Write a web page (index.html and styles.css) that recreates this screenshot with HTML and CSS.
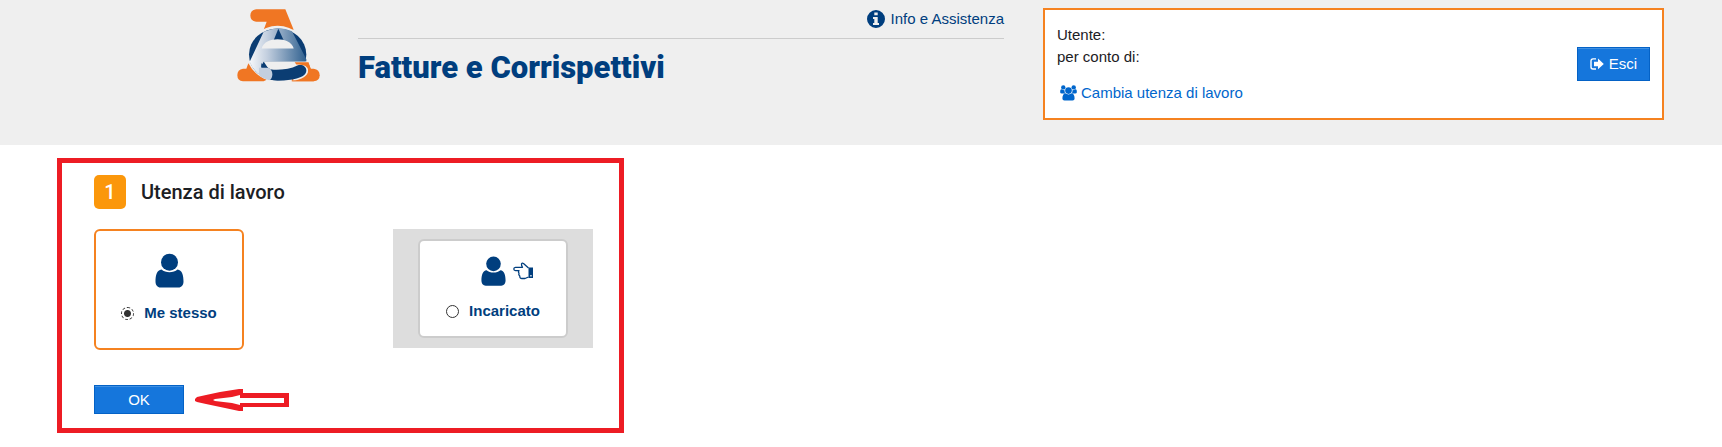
FILE: index.html
```html
<!DOCTYPE html>
<html lang="it">
<head>
<meta charset="utf-8">
<meta name="viewport" content="width=device-width, initial-scale=1">
<title>Fatture e Corrispettivi</title>
<link rel="stylesheet" href="styles.css">
</head>
<body>
<svg class="defs" aria-hidden="true">
  <symbol id="user" viewBox="0 0 29 34">
    <path d="M6.500 16C2 16.500 .500 21.500 .500 28C.500 31.500 2.500 34 5.500 34H23.500C26.500 34 28.500 31.500 28.500 28C28.500 21.500 27 16.500 22.500 16C20.500 17.800 17.500 18.800 14.500 18.800S8.500 17.800 6.500 16Z"/>
    <circle cx="14.500" cy="8.700" r="8.500"/>
  </symbol>
</svg>
<header class="header">
  <svg class="logo" viewBox="50 26 249 219" role="img" aria-label="Agenzia delle Entrate">
    <defs>
      <linearGradient id="shade" x1="90" x2="258" y1="0" y2="0" gradientUnits="userSpaceOnUse">
        <stop offset="0" stop-color="#f4f6f9"/><stop offset=".3" stop-color="#c3cfdf"/><stop offset="1" stop-color="#2f608f"/>
      </linearGradient>
    </defs>
    <path fill="#f07623" d="M108 28H195L220 90H130L139 66H108Q90 63 90 47T108 28ZM84 190L78 207H68Q51 210 51 226T68 244H130L139 240Q103 226 84 190ZM224 187H264L271 207H280Q298 210 298 226T280 244H214Z"/>
    <ellipse cx="172" cy="161" rx="90" ry="83" fill="#efefef"/>
    <ellipse cx="172" cy="164" rx="86" ry="78" fill="#0b3d73"/>
    <path fill="url(#shade)" d="M130 96Q174 76 215 94L258 178V186H130L122 200Q134 206 149 207Q164 222 149 240Q103 226 88 186Z"/>
    <path fill="#0b3d73" d="M174 87L190 121H160Z"/>
    <path fill="#efefef" d="M124 146C132 109 211 109 220 146Z"/>
    <path fill="#efefef" d="M130 185H264L262 240L232 243L216 241L240 220L230 204Q190 214 146 209Z"/>
    <path fill="#f07623" d="M223 187H264L271 207L298 226L280 244H214Q262 236 264 212Q262 192 228 194Z"/>
    <path fill="#0b3d73" d="M149 209C180 211 209 209 231 197C246 193 257 200 258 211C258 224 248 230 229 236C202 243 172 244 147 240Q164 225 149 209Z"/>
    <path fill="#0b3d73" d="M123 190L150 208L123 206Z"/>
    <path fill="#c3cfdf" d="M116 204H143Q156 209 156 223T147 241Q126 235 116 226Z"/>
  </svg>
  <div class="brand">
    <nav class="brand-nav">
      <a class="info" href="#">
        <svg width="18" height="18" viewBox="0 0 18 18" fill="currentColor" aria-hidden="true"><path fill-rule="evenodd" d="M9 0A9 9 0 1 1 9 18A9 9 0 0 1 9 0ZM7.300 2.500V5.300H10.700V2.500ZM6 7V9H7.300V13H6V15H12V13H10.700V7Z"/></svg>
        <span>Info e Assistenza</span>
      </a>
    </nav>
    <h1 class="title">Fatture e Corrispettivi</h1>
  </div>
  <section class="account" aria-label="Utente">
    <div>
      <p class="line">Utente:</p>
      <p class="line">per conto di:</p>
      <a class="switch" href="#">
        <svg width="17" height="16" viewBox="0 0 17 16" fill="currentColor" aria-hidden="true"><circle cx="3.300" cy="2.400" r="2.200"/><circle cx="13.700" cy="2.400" r="2.200"/><path d="M.200 7.500Q0 4.300 1.500 4.300L4.700 5.400Q4.200 7 5.200 8.500H1.700Q.400 8.500 .200 7.500ZM16.800 7.500Q17 4.300 15.500 4.300L12.300 5.400Q12.800 7 11.800 8.500H15.300Q16.600 8.500 16.800 7.500Z"/><circle cx="8.500" cy="5.600" r="3.300"/><path d="M5.300 8.300Q8.500 10.600 11.700 8.300Q14.600 9 14.600 13.500Q14.600 15.600 12.600 15.600H4.400Q2.400 15.600 2.400 13.500Q2.400 9 5.300 8.300Z"/></svg>
        <span>Cambia utenza di lavoro</span>
      </a>
    </div>
    <button class="button logout" type="button">
      <svg width="14" height="12" viewBox="0 0 14 12" aria-hidden="true"><path fill="none" stroke="currentColor" stroke-width="1.400" d="M6 .900H3Q1 .900 1 3V9Q1 11 3 11H6"/><path fill="currentColor" d="M4 3.700H8V.600L13.800 6L8 11.200V8.200H4Z"/></svg>
      <span>Esci</span>
    </button>
  </section>
</header>
<main class="panel">
  <form>
    <h2 class="step"><span class="badge">1</span><span>Utenza di lavoro</span></h2>
    <div class="choices">
      <label class="card selected">
        <span class="icons"><svg class="person" aria-hidden="true"><use href="#user"/></svg></span>
        <span class="option"><input type="radio" name="utenza" checked>Me stesso</span>
      </label>
      <div class="tile">
        <label class="card compact">
          <span class="icons">
            <svg class="person small" aria-hidden="true"><use href="#user"/></svg>
            <svg width="20" height="18" viewBox="0 0 20 18" aria-hidden="true"><path fill="none" stroke="#003e7e" stroke-width="1.300" stroke-linejoin="round" d="M15.500 6L10.500 1.500Q9 .500 8.500 2Q8.300 3.500 9.500 5.300H2.500Q.800 5.500 .800 7T2.500 8.600H6Q4.800 10 6 11.300Q5.200 13 6.800 14Q6.500 16.500 9 16.500H12L15.500 15"/><path fill="#003e7e" fill-rule="evenodd" d="M15.500 5.500H20V16H15.500ZM17.300 13V14.500H18.600V13Z"/></svg>
          </span>
          <span class="option"><input type="radio" name="utenza">Incaricato</span>
        </label>
      </div>
    </div>
    <div class="actions">
      <button class="button ok" type="button">OK</button>
      <svg width="94" height="22" viewBox="0 0 94 22" aria-hidden="true"><path fill="#ed1c24" fill-rule="evenodd" d="M0 10L2 8L11 6L25 3L44 0H48V4H94V18H48V22H44L30 19L11 15L2 13L0 12ZM18 11L20 12L37 14L45 16V14H89V9H45V6L37 8L20 10Z"/></svg>
    </div>
  </form>
</main>
</body>
</html>
```
FILE: styles.css
```css
* {
  box-sizing: border-box;
}

body {
  margin: 0;
  background: #fff;
  color: #1c2024;
  font: 15px/22px "Liberation Sans", Arial, sans-serif;
}

h1, h2, p {
  margin: 0;
}

a {
  text-decoration: none;
}

svg {
  flex: none;
}

.defs {
  position: absolute;
  width: 0;
  height: 0;
}

.header {
  display: grid;
  grid-template-columns: 121px minmax(0, 646fr) minmax(0, 660fr);
  align-items: start;
  padding: 8px 58px 25px 237px;
  background: #efefef;
}

.logo {
  width: 83px;
  height: 74px;
}

.brand-nav {
  display: flex;
  justify-content: flex-end;
  padding-bottom: 8px;
  border-bottom: 1px solid #ccc;
}

.info,
.switch {
  display: flex;
  align-items: center;
}

.info {
  gap: 6px;
  color: #003e7e;
}

.title {
  padding-top: 8px;
  color: #003e7e;
  font: 900 31px/42px Roboto, sans-serif;
}

.account {
  display: flex;
  align-items: center;
  justify-content: space-between;
  margin-left: 39px;
  padding: 14px 12px;
  border: 2px solid #f58220;
  background: #fff;
}

.switch {
  gap: 4px;
  margin-top: 14px;
  padding-left: 3px;
  color: #06c;
}

.button {
  display: flex;
  align-items: center;
  justify-content: center;
  gap: 5px;
  border: 1px solid #0462c6;
  border-radius: 0;
  background: #1576dc;
  box-shadow: inset 0 1px #4090e2;
  color: #fff;
  font: inherit;
}

.logout {
  padding: 5px 12px;
}

.panel {
  max-width: 567px;
  margin: 13px 57px;
  padding: 12px 26px 14px 32px;
  border: 5px solid #ed1c24;
}

.step {
  display: flex;
  align-items: center;
  gap: 15px;
  font: 500 20px/34px Roboto, sans-serif;
}

.badge {
  width: 32px;
  border-radius: 5px;
  background: #fb970b;
  color: #fff;
  text-align: center;
}

.choices {
  display: flex;
  align-items: flex-start;
  justify-content: space-between;
  padding: 20px 0 35px;
}

.card {
  display: flex;
  flex-direction: column;
  align-items: center;
  gap: 14px;
  width: 150px;
  padding: 22px 0 24px;
  border: 2px solid #ccc;
  border-radius: 6px;
  background: #fff;
  color: #003e7e;
  font-weight: bold;
}

.selected {
  border-color: #f58220;
}

.compact {
  padding: 15px 0 14px;
}

.tile {
  display: flex;
  justify-content: center;
  width: 200px;
  padding: 10px 0;
  background: #ddd;
}

.icons,
.option {
  display: flex;
  align-items: center;
}

.icons {
  gap: 7px;
}

.compact .icons {
  padding-left: 28px;
}

.option {
  gap: 10px;
}

.person {
  width: 29px;
  height: 35px;
  fill: #003e7e;
}

.small {
  width: 25px;
  height: 30px;
}

input {
  appearance: none;
  width: 13px;
  height: 13px;
  margin: 0;
  border: 1px solid #333;
  border-radius: 50%;
  background: #fff;
}

input:checked {
  border-style: dashed;
  background: radial-gradient(circle, #333 0 3px, #fff 4px);
}

.actions {
  display: flex;
  align-items: center;
  gap: 11px;
}

.ok {
  width: 90px;
  padding: 3px 0 2px;
}
```
